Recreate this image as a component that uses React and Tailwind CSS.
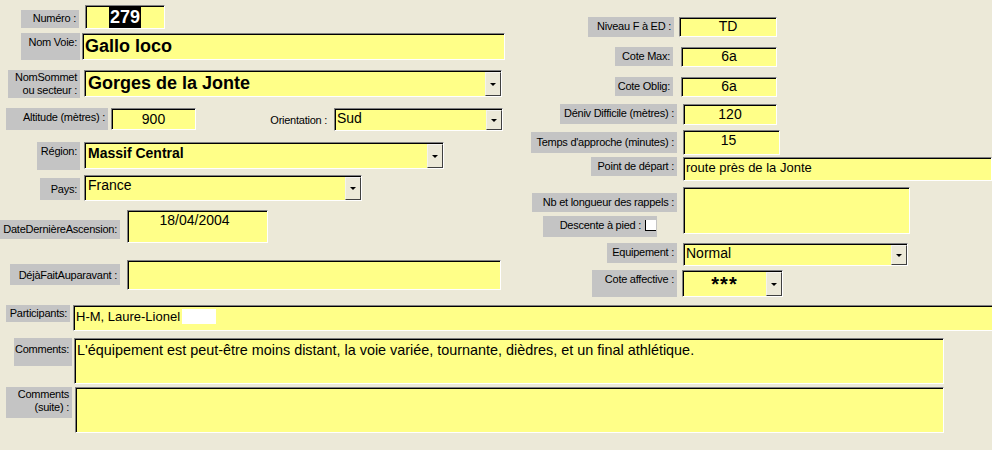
import React from "react";

// Sunken yellow text box, optional dropdown button on the right
const Field = ({ className = "", textClass = "", drop = false, children }) => (
  <div
    className={`flex shrink-0 bg-[#ffff88] border border-t-[#808080] border-l-[#808080] border-b-white border-r-white shadow-[inset_1px_1px_0_#000] ${className}`}
  >
    <div className={`flex-1 min-w-0 overflow-hidden whitespace-nowrap ${textClass}`}>{children}</div>
    {drop && (
      <div className="w-[16px] shrink-0 mt-[1px] bg-[#ece9d8] border border-t-[#f4f3ee] border-l-[#f4f3ee] border-r-[#404040] border-b-[#404040] flex items-center justify-center">
        <div className="w-0 h-0 border-l-[3px] border-r-[3px] border-t-[3px] border-l-transparent border-r-transparent border-t-black" />
      </div>
    )}
  </div>
);

// Grey Access label, text right aligned at the top
const Label = ({ className = "", children }) => (
  <div className={`shrink-0 bg-[#c4c4c4] text-[11px] leading-[13px] tracking-[-0.25px] whitespace-nowrap text-right pr-[3px] pt-[3px] ${className}`}>
    {children}
  </div>
);

export default function App() {
  return (
    <div className="w-[992px] h-[450px] overflow-hidden bg-[#ece9d8] text-black font-['Liberation_Sans',Arial,sans-serif]">
      {/* Upper part: two columns */}
      <div className="flex h-[300px]">
        {/* Left column */}
        <div className="w-[531px] shrink-0 flex flex-col">
          <div className="flex mt-[5px] h-[24px]">
            <Label className="ml-[21px] mt-[5px] w-[58px] h-[18px] !pt-[2px]">Numéro :</Label>
            <Field className="ml-[6px] w-[80px] h-[24px]" textClass="flex justify-center pt-[1px]">
              <span className="bg-black text-white font-bold text-[18px] leading-[20px] px-[1px]">279</span>
            </Field>
          </div>

          <div className="flex mt-[4px] h-[27px]">
            <Label className="ml-[21px] w-[59px] h-[27px]">Nom Voie:</Label>
            <Field className="ml-[2px] w-[423px] h-[27px]" textClass="pl-[2px] text-[18px] font-bold leading-[24px]">
              Gallo loco
            </Field>
          </div>

          <div className="flex mt-[10px] h-[28px]">
            <Label className="ml-[8px] w-[72px] h-[28px] !pt-[1px]">
              NomSommet
              <br />
              ou secteur :
            </Label>
            <Field drop className="ml-[4px] w-[418px] h-[27px]" textClass="pl-[3px] text-[18px] font-bold leading-[24px]">
              Gorges de la Jonte
            </Field>
          </div>

          <div className="flex mt-[10px] h-[23px]">
            <Label className="ml-[6px] w-[102px] h-[22px]">Altitude (mètres) :</Label>
            <Field className="ml-[3px] w-[85px] h-[22px]" textClass="text-center text-[14px] leading-[19px] pt-[1px]">
              900
            </Field>
            <div className="w-[138px] shrink-0 flex justify-end pr-[7px] pt-[6px] text-[11px] leading-[13px] tracking-[-0.25px]">Orientation :</div>
            <Field drop className="w-[169px] h-[23px]" textClass="pl-[2px] text-[14px] leading-[19px]">
              Sud
            </Field>
          </div>

          <div className="flex mt-[11px] h-[28px]">
            <Label className="ml-[37px] w-[43px] h-[28px]">Région:</Label>
            <Field drop className="ml-[4px] w-[360px] h-[27px]" textClass="pl-[3px] text-[14px] font-bold leading-[20px]">
              Massif Central
            </Field>
          </div>

          <div className="flex mt-[5px] h-[26px]">
            <Label className="ml-[40px] mt-[3px] w-[40px] h-[22px] !pt-[5px]">Pays:</Label>
            <Field drop className="ml-[4px] w-[278px] h-[26px]" textClass="pl-[3px] text-[14px] leading-[18px]">
              France
            </Field>
          </div>

          <div className="flex mt-[9px] h-[33px]">
            <Label className="mt-[10px] w-[120px] h-[19px]">DateDernièreAscension:</Label>
            <Field className="ml-[7px] w-[141px] h-[33px]" textClass="text-center text-[14px] leading-[18px] pr-[6px]">
              18/04/2004
            </Field>
          </div>

          <div className="flex mt-[17px] h-[30px]">
            <Label className="ml-[10px] mt-[4px] w-[110px] h-[21px] !pt-[5px]">DéjàFaitAuparavant :</Label>
            <Field className="ml-[7px] w-[374px] h-[30px]" />
          </div>
        </div>

        {/* Right column */}
        <div className="flex-1 min-w-0 flex flex-col">
          <div className="flex mt-[17px] h-[20px]">
            <Label className="ml-[57px] w-[86px] h-[20px]">Niveau F à ED :</Label>
            <Field className="ml-[5px] w-[98px] h-[20px]" textClass="text-center text-[14px] leading-[17px]">
              TD
            </Field>
          </div>

          <div className="flex mt-[10px] h-[20px]">
            <Label className="ml-[84px] w-[58px] h-[19px]">Cote Max:</Label>
            <Field className="ml-[8px] w-[96px] h-[20px]" textClass="text-center text-[14px] leading-[17px]">
              6a
            </Field>
          </div>

          <div className="flex mt-[10px] h-[20px]">
            <Label className="ml-[84px] w-[58px] h-[19px]">Cote Oblig:</Label>
            <Field className="ml-[8px] w-[96px] h-[20px]" textClass="text-center text-[14px] leading-[17px]">
              6a
            </Field>
          </div>

          <div className="flex mt-[7px] h-[21px]">
            <Label className="ml-[29px] w-[117px] h-[20px]">Déniv Difficile (mètres) :</Label>
            <Field className="ml-[6px] w-[94px] h-[21px]" textClass="text-center text-[14px] leading-[18px]">
              120
            </Field>
          </div>

          <div className="flex mt-[5px] h-[25px]">
            <Label className="mt-[2px] w-[146px] h-[21px] !pt-[4px]">Temps d'approche (minutes) :</Label>
            <Field className="ml-[6px] w-[97px] h-[25px]" textClass="text-center text-[14px] leading-[18px] pr-[6px]">
              15
            </Field>
          </div>

          <div className="flex mt-[2px] h-[24px]">
            <Label className="ml-[60px] w-[86px] h-[19px]">Point de départ :</Label>
            <Field className="ml-[6px] w-[309px] h-[24px]" textClass="pl-[2px] text-[13px] leading-[18px] pt-[1px]">
              route près de la Jonte
            </Field>
          </div>

          <div className="flex mt-[6px] h-[50px]">
            <div className="w-[146px] shrink-0 flex flex-col">
              <Label className="ml-[1px] mt-[6px] w-[145px] h-[19px]">Nb et longueur des rappels :</Label>
              <div className="ml-[12px] mt-[4px] w-[114px] h-[21px] bg-[#c4c4c4] flex items-start justify-end text-[11px] leading-[13px] tracking-[-0.25px] whitespace-nowrap pt-[3px]">
                <span className="mr-[4px]">Descente à pied :</span>
                <div className="w-[11px] h-[11px] mt-[1px] mr-[1px] bg-white border-l border-b border-l-black border-b-black" />
              </div>
            </div>
            <Field className="ml-[6px] w-[227px] h-[47px]" />
          </div>

          <div className="flex mt-[6px] h-[23px]">
            <Label className="ml-[76px] w-[70px] h-[20px]">Equipement :</Label>
            <Field drop className="ml-[6px] w-[225px] h-[23px]" textClass="pl-[2px] text-[14px] leading-[18px]">
              Normal
            </Field>
          </div>

          <div className="flex mt-[4px] h-[27px]">
            <Label className="ml-[61px] w-[85px] h-[27px]">Cote affective :</Label>
            <Field drop className="ml-[5px] w-[101px] h-[27px]" textClass="text-center text-[20px] font-bold leading-[19px] tracking-[1px] pt-[4px]">
              ***
            </Field>
          </div>
        </div>
      </div>

      {/* Lower part: full-width memo fields */}
      <div className="flex flex-col">
        <div className="flex mt-[5px] h-[26px]">
          <Label className="ml-[6px] w-[64px] h-[17px] !pt-[2px]">Participants:</Label>
          <Field className="ml-[3px] w-[930px] h-[26px]" textClass="pl-[2px] text-[13px] leading-[18px] pt-[2px] flex items-start">
            <span>H-M, Laure-Lionel</span>
            <span className="inline-block ml-[2px] mt-[1px] w-[34px] h-[15px] bg-white" />
          </Field>
        </div>

        <div className="flex mt-[7px] h-[46px]">
          <Label className="ml-[14px] w-[58px] h-[28px] !pt-[5px]">Comments:</Label>
          <Field className="ml-[2px] w-[870px] h-[46px]" textClass="pl-[2px] text-[14.4px] leading-[18px] pt-[2px]">
            L'équipement est peut-être moins distant, la voie variée, tournante, dièdres, et un final athlétique.
          </Field>
        </div>

        <div className="flex mt-[3px] h-[46px]">
          <Label className="ml-[6px] w-[66px] h-[31px] !pt-[1px]">
            Comments
            <br />
            (suite) :
          </Label>
          <Field className="ml-[3px] w-[869px] h-[46px]" />
        </div>
      </div>
    </div>
  );
}
